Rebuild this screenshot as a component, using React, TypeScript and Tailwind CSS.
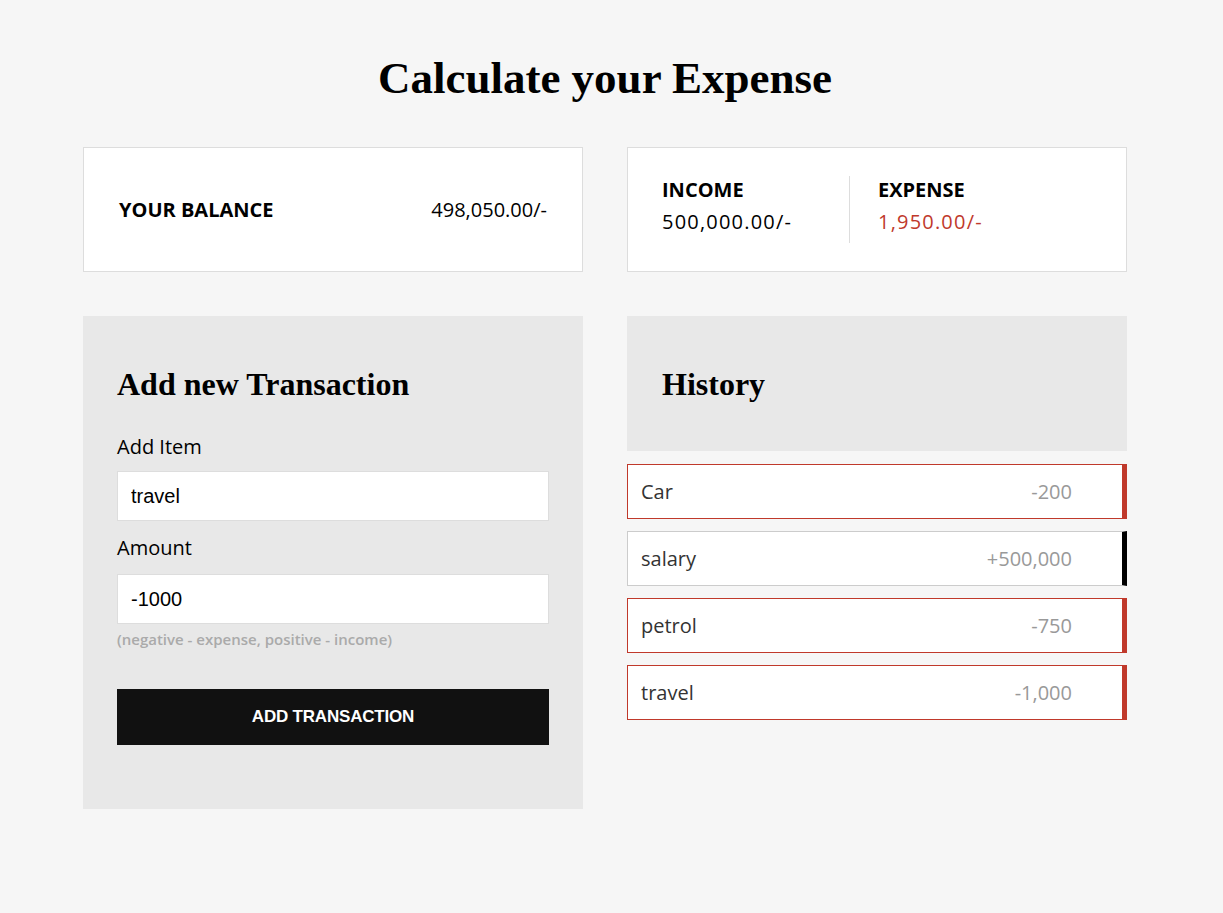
import { useState } from 'react'

interface Transaction {
  id: number
  text: string
  amount: number
}

const serif = "font-['Liberation_Serif',serif]"
const sans = "font-['Open_Sans',sans-serif]"

const formatMoney = (n: number) =>
  n.toLocaleString('en-US', { minimumFractionDigits: 2, maximumFractionDigits: 2 }) + '/-'

export default function App() {
  const [text, setText] = useState('travel')
  const [amount, setAmount] = useState('-1000')
  const [transactions, setTransactions] = useState<Transaction[]>([
    { id: 1, text: 'Car', amount: -200 },
    { id: 2, text: 'salary', amount: 500000 },
    { id: 3, text: 'petrol', amount: -750 },
    { id: 4, text: 'travel', amount: -1000 },
  ])

  const income = transactions.filter(t => t.amount > 0).reduce((a, t) => a + t.amount, 0)
  const expense = transactions.filter(t => t.amount < 0).reduce((a, t) => a - t.amount, 0)
  const balance = income - expense

  const addTransaction = () => {
    const value = Number(amount)
    if (!text || !value) return
    setTransactions([...transactions, { id: Date.now(), text, amount: value }])
  }

  return (
    <div className={`min-h-screen bg-[#f6f6f6] ${sans}`}>
      <div className="ml-[83px] w-[1044px] pt-[51px]">
        <h1 className={`${serif} text-center text-[45px] leading-[54px] font-bold text-black`}>
          Calculate your Expense
        </h1>

        {/* summary cards */}
        <div className="mt-[42px] grid grid-cols-2 gap-[44px]">
          <div className="flex h-[125px] items-center justify-between border border-[#dddddd] bg-white px-[35px]">
            <span className="text-[20px] font-bold text-black">YOUR BALANCE</span>
            <span className="text-[20px] font-medium text-black">{formatMoney(balance)}</span>
          </div>
          <div className="flex h-[125px] items-center border border-[#dddddd] bg-white px-[34px]">
            <div className="flex h-[67px] w-[187px] flex-col">
              <span className="mt-[1px] text-[20px] leading-[26px] font-bold text-black">INCOME</span>
              <span className="mt-[6px] text-[20px] leading-[26px] font-medium tracking-[1.2px] text-black">
                {formatMoney(income)}
              </span>
            </div>
            <div className="flex h-[67px] flex-col border-l border-[#dddddd] pl-[28px]">
              <span className="mt-[1px] text-[20px] leading-[26px] font-bold text-black">EXPENSE</span>
              <span className="mt-[6px] text-[20px] leading-[26px] font-medium tracking-[1.2px] text-[#c0392b]">
                {formatMoney(expense)}
              </span>
            </div>
          </div>
        </div>

        <div className="mt-[44px] grid grid-cols-2 items-start gap-[44px]">
          {/* form */}
          <div className="bg-[#e8e8e8] px-[34px] pt-[50px] pb-[64px]">
            <h2 className={`${serif} text-[32px] leading-[36px] font-bold text-black`}>Add new Transaction</h2>
            <label className="mt-[32px] block text-[20px] leading-[25px] text-black">Add Item</label>
            <input
              value={text}
              onChange={e => setText(e.target.value)}
              className="mt-[12px] block h-[50px] w-full border border-[#dddddd] bg-white px-[13px] font-['Liberation_Sans',sans-serif] text-[20px] text-black outline-none"
            />
            <label className="mt-[14px] block text-[20px] leading-[25px] text-black">Amount</label>
            <input
              value={amount}
              onChange={e => setAmount(e.target.value)}
              className="mt-[14px] block h-[50px] w-full border border-[#dddddd] bg-white px-[13px] font-['Liberation_Sans',sans-serif] text-[20px] text-black outline-none"
            />
            <p className="mt-[5px] text-[15px] leading-[20px] font-semibold text-[#aaaaaa]">
              (negative - expense, positive - income)
            </p>
            <button
              onClick={addTransaction}
              className="mt-[40px] block h-[56px] w-full bg-[#111111] font-['Liberation_Sans',sans-serif] text-[17px] font-bold tracking-[-0.2px] text-white"
            >
              ADD TRANSACTION
            </button>
          </div>

          {/* history */}
          <div>
            <div className="flex h-[135px] items-center bg-[#e8e8e8] px-[35px]">
              <h2 className={`${serif} text-[32px] leading-[36px] font-bold text-black`}>History</h2>
            </div>
            <ul className="mt-[13px] flex flex-col gap-[12px]">
              {transactions.map(t => (
                <li
                  key={t.id}
                  className={`flex h-[55px] items-center justify-between border border-r-[5px] bg-white pr-[50px] pl-[13px] ${
                    t.amount < 0 ? 'border-[#c0392b]' : 'border-[#cccccc] border-r-black'
                  }`}
                >
                  <span className="text-[20px] font-medium text-[#333333]">{t.text}</span>
                  <span className="text-[20px] font-medium text-[#999999]">
                    {(t.amount > 0 ? '+' : '') + t.amount.toLocaleString('en-US')}
                  </span>
                </li>
              ))}
            </ul>
          </div>
        </div>
      </div>
    </div>
  )
}
